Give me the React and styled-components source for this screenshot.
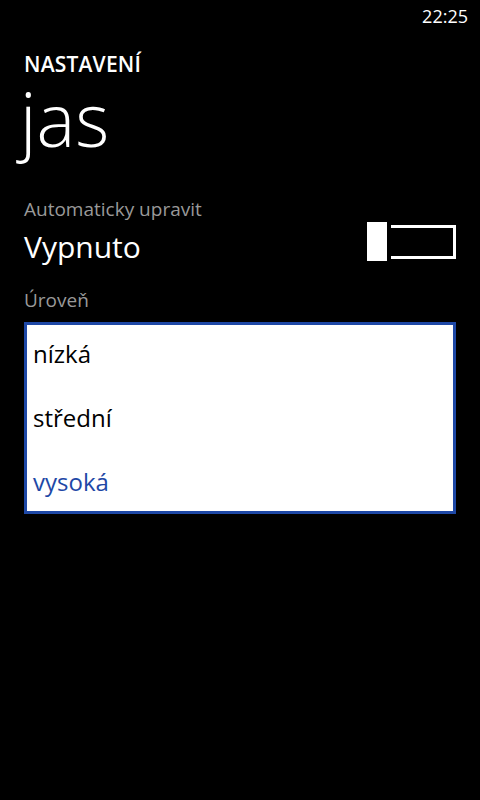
import React from "react";
import styled, { createGlobalStyle } from "styled-components";

const Global = createGlobalStyle`
  html, body { margin: 0; padding: 0; background: #000; }
  body { font-family: "Open Sans", "Noto Sans", sans-serif; color: #fff; }
`;

const Screen = styled.div`
  width: 480px;
  height: 800px;
  background: #000;
  display: flex;
  flex-direction: column;
  overflow: hidden;
`;

const StatusBar = styled.div`
  height: 32px;
  display: flex;
  justify-content: flex-end;
  align-items: center;
  padding-right: 12px;
  font-size: 18px;
  line-height: 32px;
  color: #fff;
`;

const Page = styled.div`
  display: flex;
  flex-direction: column;
  padding: 0 24px;
`;

const AppTitle = styled.div`
  margin-top: 18px;
  font-size: 21px;
  font-weight: 600;
  line-height: 28px;
  letter-spacing: 0.2px;
`;

const PageTitle = styled.div`
  margin-top: 5px;
  margin-left: -4px;
  font-size: 73px;
  font-weight: 300;
  line-height: 72px;
`;

const Label = styled.div`
  margin-top: ${(p) => p.$mt}px;
  font-size: 19px;
  line-height: 26px;
  color: #999;
`;

const ToggleRow = styled.div`
  margin-top: 5px;
  display: flex;
  justify-content: space-between;
  align-items: flex-start;
`;

const Value = styled.div`
  font-size: 30px;
  line-height: 40px;
`;

const Toggle = styled.div`
  position: relative;
  margin-top: -5px;
  width: 89px;
  height: 39px;
`;

const Track = styled.div`
  position: absolute;
  left: 0;
  right: 0;
  top: 3px;
  height: 34px;
  box-sizing: border-box;
  border: 3px solid #fff;
`;

const Thumb = styled.div`
  position: absolute;
  left: 0;
  top: 0;
  width: 24px;
  height: 39px;
  box-sizing: border-box;
  background: #fff;
  border-right: 4px solid #000;
`;

const ListBox = styled.div`
  margin-top: 9px;
  height: 192px;
  box-sizing: border-box;
  border: 3px solid #1e48a6;
  background: #fff;
  display: flex;
  flex-direction: column;
  gap: 7px;
  padding-left: 6px;
`;

const Item = styled.div`
  font-size: 24px;
  line-height: 57px;
  color: ${(p) => (p.$selected ? "#1e48a6" : "#000")};
`;

export default function App() {
  return (
    <Screen>
      <Global />
      <StatusBar>22:25</StatusBar>
      <Page>
        <AppTitle>NASTAVENÍ</AppTitle>
        <PageTitle>jas</PageTitle>
        <Label $mt={41}>Automaticky upravit</Label>
        <ToggleRow>
          <Value>Vypnuto</Value>
          <Toggle>
            <Track />
            <Thumb />
          </Toggle>
        </ToggleRow>
        <Label $mt={20}>Úroveň</Label>
        <ListBox>
          <Item>nízká</Item>
          <Item>střední</Item>
          <Item $selected>vysoká</Item>
        </ListBox>
      </Page>
    </Screen>
  );
}
